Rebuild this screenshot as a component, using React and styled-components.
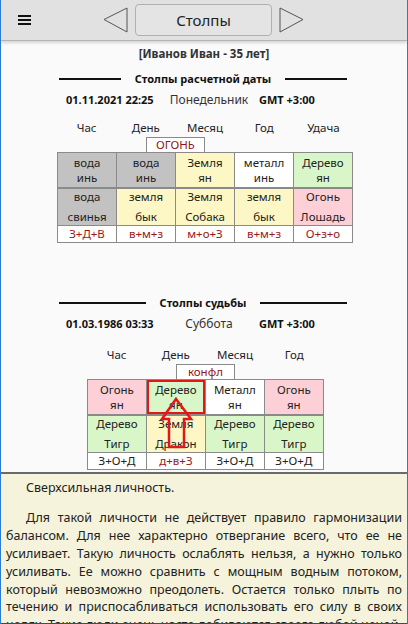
import React from 'react';
import styled, { createGlobalStyle } from 'styled-components';

const GlobalStyle = createGlobalStyle`
  html, body { margin: 0; padding: 0; background: #fafafa; }
  body { font-family: "Noto Sans", "Open Sans", sans-serif; color: #222; }
`;

// data
const pillars1 = {
  labels: ['Час', 'День', 'Месяц', 'Год', 'Удача'],
  tag: 'ОГОНЬ',
  top: [
    { a: 'вода', b: 'инь', bg: 'gray' },
    { a: 'вода', b: 'инь', bg: 'gray' },
    { a: 'Земля', b: 'ян', bg: 'yellow' },
    { a: 'металл', b: 'инь', bg: 'white' },
    { a: 'Дерево', b: 'ян', bg: 'green' },
  ],
  bottom: [
    { a: 'вода', b: 'свинья', bg: 'gray' },
    { a: 'земля', b: 'бык', bg: 'yellow' },
    { a: 'Земля', b: 'Собака', bg: 'yellow' },
    { a: 'земля', b: 'бык', bg: 'yellow' },
    { a: 'Огонь', b: 'Лошадь', bg: 'pink' },
  ],
  sums: [
    { t: 'З+Д+В', red: true },
    { t: 'в+м+з', red: true },
    { t: 'м+о+З', red: true },
    { t: 'в+м+з', red: true },
    { t: 'О+з+о', red: true },
  ],
};

const pillars2 = {
  labels: ['Час', 'День', 'Месяц', 'Год'],
  tag: 'конфл',
  top: [
    { a: 'Огонь', b: 'ян', bg: 'pink' },
    { a: 'Дерево', b: 'ян', bg: 'green', hl: true },
    { a: 'Металл', b: 'ян', bg: 'white' },
    { a: 'Огонь', b: 'ян', bg: 'pink' },
  ],
  bottom: [
    { a: 'Дерево', b: 'Тигр', bg: 'green' },
    { a: 'Земля', b: 'Дракон', bg: 'yellow' },
    { a: 'Дерево', b: 'Тигр', bg: 'green' },
    { a: 'Дерево', b: 'Тигр', bg: 'green' },
  ],
  sums: [
    { t: 'З+О+Д' },
    { t: 'д+в+З', red: true },
    { t: 'З+О+Д' },
    { t: 'З+О+Д' },
  ],
};

const colors = {
  gray: '#c2c2c2',
  yellow: '#fcf7c5',
  white: '#ffffff',
  green: '#d9f6c9',
  pink: '#fcd0d6',
};

const Frame = styled.div`
  width: 408px;
  height: 624px;
  box-sizing: border-box;
  border-left: 1px solid #2a7bd4;
  border-right: 1px solid #2a7bd4;
  display: flex;
  flex-direction: column;
  overflow: hidden;
`;

const Header = styled.header`
  height: 40px;
  flex: none;
  background: #e1e1e1;
  border-bottom: 1px solid #b4b4b4;
  box-shadow: 0 2px 3px rgba(0, 0, 0, 0.15);
  display: flex;
  align-items: center;
  position: relative;
  z-index: 1;
`;

const Burger = styled.div`
  width: 13px;
  margin-left: 17px;
  display: flex;
  flex-direction: column;
  gap: 2px;
  span { display: block; height: 2px; background: #111; }
`;

const NavGroup = styled.div`
  margin-left: 72px;
  display: flex;
  align-items: center;
  gap: 7px;
`;

const TitleButton = styled.div`
  width: 137px;
  height: 32px;
  box-sizing: border-box;
  border: 1px solid #b0b0b0;
  border-radius: 4px;
  background: #e4e4e4;
  display: flex;
  align-items: center;
  justify-content: center;
  font-size: 15px;
  color: #222;
`;

const Content = styled.main`
  flex: 1;
  overflow: hidden;
  background: #fafafa;
`;

const Name = styled.div`
  text-align: center;
  font-weight: 700;
  font-size: 11.5px;
  color: #333;
  margin-top: 5px;
  line-height: 16px;
`;

const SectionTitle = styled.div`
  display: flex;
  align-items: center;
  margin: ${(p) => p.$mt}px 60px 0 58px;
  gap: 14px;
  font-weight: 700;
  font-size: 11px;
  color: #111;
  line-height: 16px;
  &::before, &::after {
    content: '';
    flex: 1;
    height: 2px;
    background: #111;
  }
`;

const DateRow = styled.div`
  display: grid;
  grid-template-columns: 93px 100px auto;
  align-items: center;
  margin: 5px 0 0 65px;
  line-height: 16px;
`;

const DateText = styled.span`
  font-weight: ${(p) => (p.$bold ? 700 : 400)};
  font-size: ${(p) => (p.$bold ? 11 : 12)}px;
  text-align: ${(p) => (p.$center ? 'center' : 'left')};
  color: ${(p) => (p.$bold ? '#111' : '#333')};
  white-space: nowrap;
`;

const Block = styled.div`
  width: ${(p) => p.$cols * 59.2}px;
  margin: ${(p) => p.$mt}px 0 0 ${(p) => p.$left}px;
  position: relative;
`;

const Labels = styled.div`
  display: grid;
  grid-template-columns: repeat(${(p) => p.$cols}, 1fr);
  font-size: 11.5px;
  line-height: 16px;
  color: #222;
  text-align: center;
`;

const TagRow = styled.div`
  display: grid;
  grid-template-columns: repeat(${(p) => p.$cols * 2}, 1fr);
  margin-top: 1px;
`;

const Tag = styled.div`
  grid-column: 4 / 6;
  border: 1px solid #8a8a8a;
  border-bottom: none;
  background: #fff;
  color: #8e1515;
  font-size: 11.5px;
  line-height: 14px;
  text-align: center;
`;

const Grid = styled.div`
  display: grid;
  grid-template-columns: repeat(${(p) => p.$cols}, 1fr);
  border: 1px solid #8a8a8a;
  background: #8a8a8a;
  gap: 1px;
`;

const Cell = styled.div`
  background: ${(p) => colors[p.$bg] || '#fff'};
  height: ${(p) => p.$h}px;
  display: flex;
  flex-direction: column;
  align-items: center;
  justify-content: center;
  gap: ${(p) => p.$gap}px;
  font-size: 11.5px;
  line-height: 14px;
  color: ${(p) => (p.$red ? '#9b1818' : '#222')};
  margin-bottom: ${(p) => (p.$sep ? 1 : 0)}px;
  outline: ${(p) => (p.$hl ? '2px solid #e01818' : 'none')};
  outline-offset: -2px;
`;

const Arrow = styled.svg`
  position: absolute;
  left: 72px;
  top: 52px;
  overflow: visible;
  pointer-events: none;
`;

const Panel = styled.section`
  flex: none;
  height: 152px;
  box-sizing: border-box;
  background: #f6f3dc;
  border-top: 2px solid #6a6a6a;
  border-bottom: 1px solid #2a4f80;
  padding: 5px 5px 0 5px;
  font-size: 12.5px;
  line-height: 17.9px;
  color: #222;
  overflow: hidden;
`;

const Para = styled.p`
  margin: 0 0 ${(p) => p.$mb}px 0;
  text-indent: 20px;
  text-align: justify;
`;

function Triangle({ dir }) {
  const pts = dir === 'left' ? '1,12.5 24,1 24,25' : '24,12.5 1,1 1,25';
  return (
    <svg width="25" height="26" viewBox="0 0 25 26">
      <polygon points={pts} fill="none" stroke="#555" strokeWidth="1" />
    </svg>
  );
}

function Pillars({ data, left, mt }) {
  const cols = data.labels.length;
  return (
    <Block $cols={cols} $left={left} $mt={mt}>
      <Labels $cols={cols}>
        {data.labels.map((l) => <span key={l}>{l}</span>)}
      </Labels>
      <TagRow $cols={cols}>
        <Tag>{data.tag}</Tag>
      </TagRow>
      <Grid $cols={cols}>
        {data.top.map((c, i) => (
          <Cell key={'t' + i} $bg={c.bg} $h={34} $gap={1} $hl={c.hl} $sep>
            <span>{c.a}</span>
            <span>{c.b}</span>
          </Cell>
        ))}
        {data.bottom.map((c, i) => (
          <Cell key={'b' + i} $bg={c.bg} $h={36} $gap={6}>
            <span>{c.a}</span>
            <span>{c.b}</span>
          </Cell>
        ))}
        {data.sums.map((c, i) => (
          <Cell key={'s' + i} $h={16} $red={c.red}>
            <span>{c.t}</span>
          </Cell>
        ))}
      </Grid>
      {data.top.some((c) => c.hl) && (
        <Arrow width="34" height="52" viewBox="0 0 34 52">
          <polygon
            points="17,0 32,20 25,20 25,48 10,48 10,20 3,20"
            fill="none"
            stroke="#e01818"
            strokeWidth="2.5"
            strokeLinejoin="miter"
          />
        </Arrow>
      )}
    </Block>
  );
}

export default function App() {
  return (
    <>
      <GlobalStyle />
      <Frame>
        <Header>
          <Burger><span /><span /><span /></Burger>
          <NavGroup>
            <Triangle dir="left" />
            <TitleButton>Столпы</TitleButton>
            <Triangle dir="right" />
          </NavGroup>
        </Header>
        <Content>
          <Name>[Иванов Иван - 35 лет]</Name>
          <SectionTitle $mt={9}>Столпы расчетной даты</SectionTitle>
          <DateRow>
            <DateText $bold>01.11.2021 22:25</DateText>
            <DateText $center>Понедельник</DateText>
            <DateText $bold>GMT +3:00</DateText>
          </DateRow>
          <Pillars data={pillars1} left={56} mt={12} />
          <SectionTitle $mt={52}>Столпы судьбы</SectionTitle>
          <DateRow>
            <DateText $bold>01.03.1986 03:33</DateText>
            <DateText $center>Суббота</DateText>
            <DateText $bold>GMT +3:00</DateText>
          </DateRow>
          <Pillars data={pillars2} left={86} mt={15} />
        </Content>
        <Panel>
          <Para $mb={12}>Сверхсильная личность.</Para>
          <Para $mb={0}>
            Для такой личности не действует правило гармонизации балансом. Для нее характерно
            отвергание всего, что ее не усиливает. Такую личность ослаблять нельзя, а нужно только
            усиливать. Ее можно сравнить с мощным водным потоком, который невозможно преодолеть.
            Остается только плыть по течению и приспосабливаться использовать его силу в своих
            целях. Такие люди очень часто добиваются своего любой ценой.
          </Para>
        </Panel>
      </Frame>
    </>
  );
}
